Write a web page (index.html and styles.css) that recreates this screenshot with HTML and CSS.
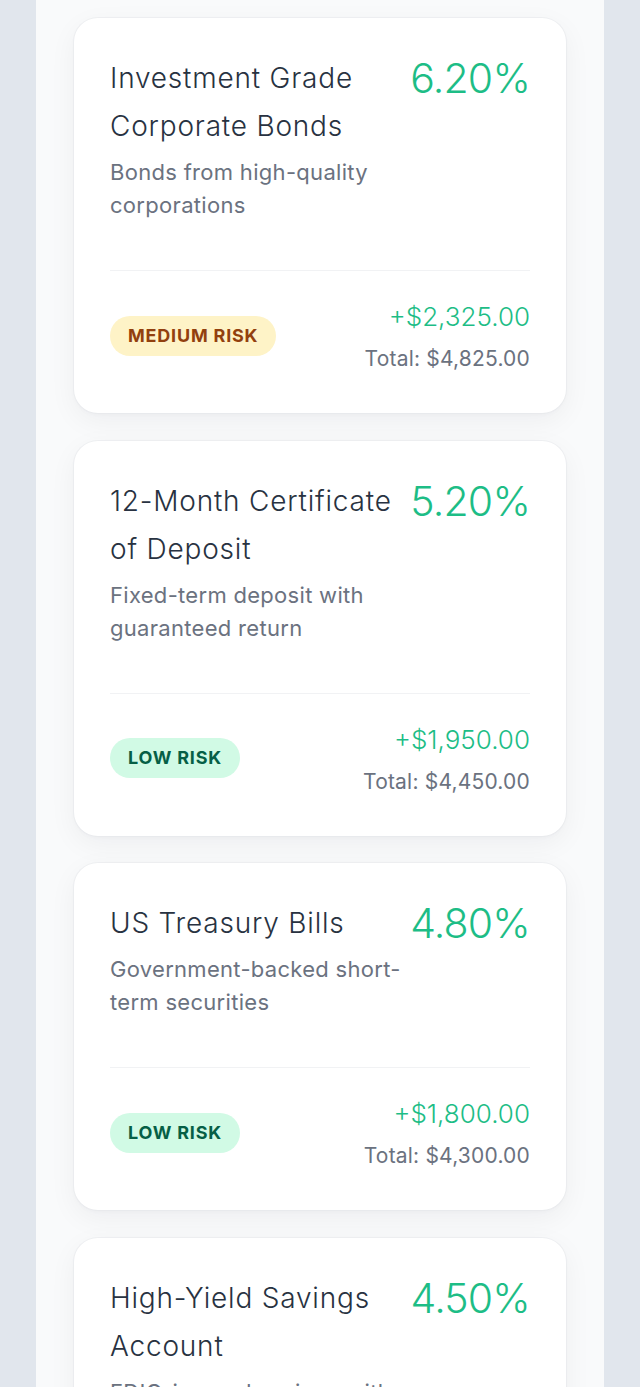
FILE: index.html
```html
<!DOCTYPE html>
<html lang="en">
<head>
<meta charset="utf-8">
<title>Investments</title>
<link rel="stylesheet" href="styles.css">
</head>
<body>
<div class="page">
  <main class="panel">
    <article class="card">
      <div class="card-head">
        <div class="info">
          <h2 class="title">Investment Grade Corporate Bonds</h2>
          <p class="desc">Bonds from high-quality corporations</p>
        </div>
        <div class="rate">6.20%</div>
      </div>
      <div class="card-foot">
        <span class="badge badge-medium">MEDIUM RISK</span>
        <div class="amounts">
          <div class="gain">+$2,325.00</div>
          <div class="total">Total: $4,825.00</div>
        </div>
      </div>
    </article>

    <article class="card">
      <div class="card-head">
        <div class="info">
          <h2 class="title">12-Month Certificate of Deposit</h2>
          <p class="desc">Fixed-term deposit with guaranteed return</p>
        </div>
        <div class="rate">5.20%</div>
      </div>
      <div class="card-foot">
        <span class="badge badge-low">LOW RISK</span>
        <div class="amounts">
          <div class="gain">+$1,950.00</div>
          <div class="total">Total: $4,450.00</div>
        </div>
      </div>
    </article>

    <article class="card">
      <div class="card-head">
        <div class="info">
          <h2 class="title">US Treasury Bills</h2>
          <p class="desc">Government-backed short-term securities</p>
        </div>
        <div class="rate">4.80%</div>
      </div>
      <div class="card-foot">
        <span class="badge badge-low">LOW RISK</span>
        <div class="amounts">
          <div class="gain">+$1,800.00</div>
          <div class="total">Total: $4,300.00</div>
        </div>
      </div>
    </article>

    <article class="card">
      <div class="card-head">
        <div class="info">
          <h2 class="title">High-Yield Savings Account</h2>
          <p class="desc">FDIC-insured savings with competitive rates</p>
        </div>
        <div class="rate">4.50%</div>
      </div>
      <div class="card-foot">
        <span class="badge badge-low">LOW RISK</span>
        <div class="amounts">
          <div class="gain">+$1,687.50</div>
          <div class="total">Total: $4,187.50</div>
        </div>
      </div>
    </article>
  </main>
</div>
</body>
</html>
```

FILE: styles.css
```css
* { box-sizing: border-box; }

html, body {
  margin: 0;
  padding: 0;
}

body {
  background: #e1e6ed;
  font-family: Inter, "Noto Sans", sans-serif;
  color: #1f2937;
  height: 1387px;
  overflow: hidden;
}

.page {
  padding: 0 36px;
}

.panel {
  background: #f9fafb;
  padding: 18px 38px 0;
  display: flex;
  flex-direction: column;
  gap: 27.5px;
  min-height: 1387px;
}

.card {
  background: #ffffff;
  border-radius: 24px;
  padding: 36px 36px 39px;
  box-shadow: 0 0 0 1px rgba(229, 231, 235, 0.55), 0 2px 4px rgba(15, 23, 42, 0.025), 0 8px 28px rgba(15, 23, 42, 0.05);
}

.card-head {
  display: flex;
  align-items: flex-start;
  gap: 8px;
  padding-bottom: 48px;
  border-bottom: 1px solid #f1f2f4;
}

.info {
  flex: 1;
  min-width: 0;
}

.title {
  margin: 0;
  font-family: "Inter Light", Inter, "Noto Sans", sans-serif;
  font-size: 28px;
  line-height: 48px;
  font-weight: 300;
  letter-spacing: 0.8px;
  color: #283241;
}

.desc {
  margin: 6px 0 0;
  font-size: 22px;
  line-height: 33px;
  font-weight: 400;
  letter-spacing: 0.3px;
  color: #6b7280;
}

.rate {
  font-family: "Inter Light", Inter, "Noto Sans", sans-serif;
  font-size: 41px;
  line-height: 48px;
  font-weight: 300;
  letter-spacing: -0.8px;
  color: #1dbd86;
  white-space: nowrap;
}

.card-foot {
  display: flex;
  align-items: center;
  justify-content: space-between;
  padding-top: 26px;
}

.badge {
  display: inline-block;
  padding: 0 18px;
  height: 40px;
  line-height: 40px;
  border-radius: 20px;
  font-size: 18px;
  font-weight: 700;
  letter-spacing: 0.8px;
}

.badge-medium {
  background: #fef3c7;
  color: #92400e;
}

.badge-low {
  background: #d1fae5;
  color: #065f46;
}

.amounts {
  text-align: right;
  display: flex;
  flex-direction: column;
  gap: 7px;
}

.gain {
  font-family: "Inter Light", Inter, "Noto Sans", sans-serif;
  font-size: 26px;
  line-height: 40px;
  font-weight: 300;
  color: #1dbd86;
}

.total {
  font-size: 21px;
  line-height: 30px;
  letter-spacing: 0.2px;
  color: #6b7280;
}
```
